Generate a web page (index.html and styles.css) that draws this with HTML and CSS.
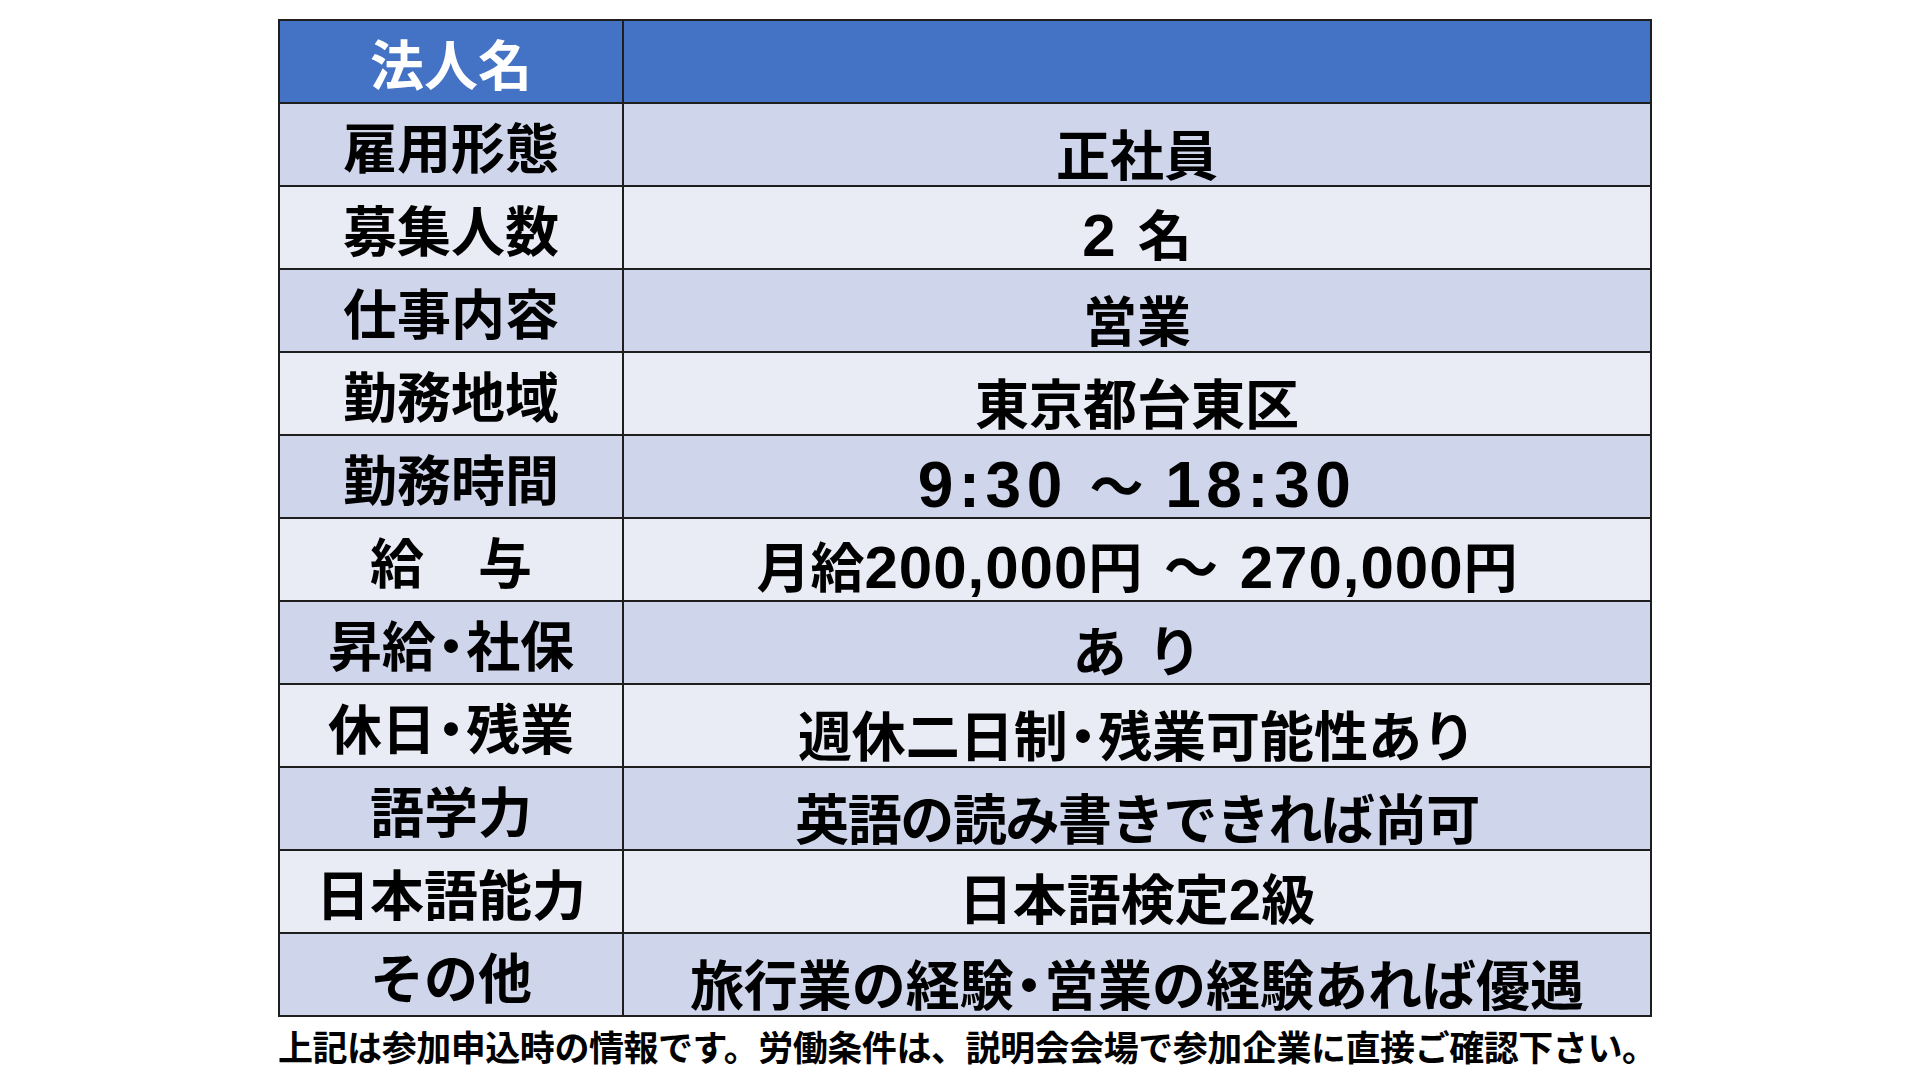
FILE: index.html
```html
<!DOCTYPE html>
<html lang="ja">
<head>
<meta charset="utf-8">
<title>募集要項</title>
<link rel="stylesheet" href="styles.css">
</head>
<body>
<main class="page">
  <table class="jobs">
    <tr class="head">
      <th class="label">法人名</th>
      <td class="value"></td>
    </tr>
    <tr class="dark">
      <th class="label">雇用形態</th>
      <td class="value">正社員</td>
    </tr>
    <tr class="light">
      <th class="label">募集人数</th>
      <td class="value"><span class="num">2</span><span class="gap"> </span>名</td>
    </tr>
    <tr class="dark">
      <th class="label">仕事内容</th>
      <td class="value">営業</td>
    </tr>
    <tr class="light">
      <th class="label">勤務地域</th>
      <td class="value">東京都台東区</td>
    </tr>
    <tr class="dark">
      <th class="label">勤務時間</th>
      <td class="value"><span class="time">9:30</span><span class="sp"> </span>～<span class="sp"> </span><span class="time">18:30</span></td>
    </tr>
    <tr class="light">
      <th class="label">給　与</th>
      <td class="value">月給<span class="num">200,000</span>円<span class="sp"> </span>～<span class="sp"> </span><span class="num">270,000</span>円</td>
    </tr>
    <tr class="dark">
      <th class="label">昇給<span class="dot">・</span>社保</th>
      <td class="value">あ<span class="gap"> </span>り</td>
    </tr>
    <tr class="light">
      <th class="label">休日<span class="dot">・</span>残業</th>
      <td class="value">週休二日制<span class="dot">・</span>残業可能性あり</td>
    </tr>
    <tr class="dark">
      <th class="label">語学力</th>
      <td class="value tight">英語の読み書きできれば尚可</td>
    </tr>
    <tr class="light">
      <th class="label">日本語能力</th>
      <td class="value">日本語検定<span class="num2">2</span>級</td>
    </tr>
    <tr class="dark">
      <th class="label">その他</th>
      <td class="value">旅行業の経験<span class="dot">・</span>営業の経験あれば優遇</td>
    </tr>
  </table>
  <p class="note">上記は参加申込時の情報です。労働条件は、説明会会場で参加企業に直接ご確認下さい。</p>
</main>
</body>
</html>
```

FILE: styles.css
```css
html, body {
  margin: 0;
  padding: 0;
  background: #ffffff;
}

body {
  font-family: "Noto Sans CJK JP", "Noto Sans", sans-serif;
  font-weight: 700;
  color: #000000;
}

.page {
  padding: 19px 0 0 278px;
}

.jobs {
  border-collapse: collapse;
  width: 1374px;
  table-layout: fixed;
  border: 2px solid #1e1e1e;
}

.jobs tr {
  height: 83px;
}

.jobs th,
.jobs td {
  border: 2px solid #1e1e1e;
  padding: 0;
  text-align: center;
  vertical-align: middle;
  font-size: 54px;
  line-height: 1;
  font-weight: 700;
  white-space: nowrap;
}

.jobs .label {
  width: 342px;
  padding-top: 3px;
}

.jobs .value {
  padding-top: 16px;
}

.jobs .tight {
  letter-spacing: -1.4px;
}

.head {
  background: #4472c4;
}

.head .label {
  color: #ffffff;
  padding-top: 2px;
}

.dark {
  background: #cfd5ea;
}

.light {
  background: #e9ebf5;
}

.dot {
  display: inline-block;
  margin: 0 -0.22em;
}

.num {
  font-family: "Liberation Sans", Arial, sans-serif;
  font-weight: 700;
  font-size: 60px;
  letter-spacing: 1px;
}

.time {
  font-family: "Liberation Sans", Arial, sans-serif;
  font-weight: 700;
  font-size: 64px;
  letter-spacing: 5.5px;
}

.num2 {
  font-family: "Liberation Sans", Arial, sans-serif;
  font-weight: 700;
  font-size: 58px;
}

.sp {
  font-family: "Liberation Sans", Arial, sans-serif;
  font-size: 60px;
  letter-spacing: 5px;
}

.gap {
  font-family: "Liberation Sans", Arial, sans-serif;
  font-size: 54px;
  letter-spacing: 6px;
}

.note {
  margin: 10px 0 0 0;
  font-size: 35px;
  line-height: 1.1;
  letter-spacing: -0.45px;
  font-weight: 700;
  white-space: nowrap;
}
```
